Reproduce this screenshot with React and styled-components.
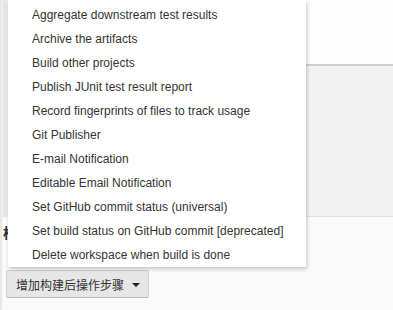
import React from 'react'
import styled, { createGlobalStyle } from 'styled-components'

const GlobalStyle = createGlobalStyle`
  html, body {
    margin: 0;
    padding: 0;
    background: #fafafa;
    font-family: 'Liberation Sans', Arial, 'Noto Sans CJK SC', sans-serif;
  }
`

const Page = styled.div`
  position: relative;
  width: 393px;
  height: 310px;
  overflow: hidden;
  display: flex;
  flex-direction: column;
  background: #fafafa;
`

const UpperRow = styled.div`
  display: flex;
  height: 217px;
`

const SideEdge = styled.div`
  width: 8px;
  flex: none;
  background: linear-gradient(
    to right,
    #dcdcdc 0,
    #eeeeee 1px,
    #eeeeee 3px,
    #dedede 4px,
    #e9e9e9 5px,
    #ececec 8px
  );
`

const Panels = styled.div`
  flex: 1;
  display: flex;
  flex-direction: column;
`

const TopPanel = styled.div`
  height: 64px;
  background: #fdfdfd;
  border-bottom: 2px solid #cfcfcf;
`

const GrayPanel = styled.div`
  flex: 1;
  background: #f2f2f2;
  border-bottom: 1px solid #e2e2e2;
`

const LowerSection = styled.div`
  flex: 1;
  display: flex;
  flex-direction: column;
  padding: 8px 0 0 0;
  border-left: 2px solid #e8e8e8;
`

const SectionLabel = styled.div`
  font-size: 14px;
  font-weight: bold;
  color: #333;
  margin-left: 1px;
  height: 45px;
  line-height: 16px;
  white-space: nowrap;
`

const AddButton = styled.button`
  align-self: flex-start;
  margin-left: 4px;
  height: 28px;
  padding: 0 8px 0 9px;
  display: flex;
  align-items: center;
  gap: 8px;
  background: #e6e6e6;
  border: 1px solid #d2d2d2;
  border-bottom-color: #bdbdbd;
  border-radius: 2px;
  font-family: 'Noto Sans CJK SC', sans-serif;
  font-size: 12px;
  color: #333;
  cursor: pointer;
`

const Caret = styled.span`
  width: 0;
  height: 0;
  border-left: 4px solid transparent;
  border-right: 4px solid transparent;
  border-top: 4px solid #222;
  margin-top: 1px;
`

const Menu = styled.ul`
  position: absolute;
  left: 8px;
  top: 0;
  width: 298px;
  margin: 0;
  padding: 3px 0 0 0;
  list-style: none;
  background: #fff;
  box-shadow: 1px 2px 4px rgba(0, 0, 0, 0.22);
`

const MenuItem = styled.li`
  height: 24px;
  line-height: 24px;
  padding-left: 24px;
  font-size: 12px;
  color: #333;
  white-space: nowrap;
  cursor: pointer;
`

const actions = [
  'Aggregate downstream test results',
  'Archive the artifacts',
  'Build other projects',
  'Publish JUnit test result report',
  'Record fingerprints of files to track usage',
  'Git Publisher',
  'E-mail Notification',
  'Editable Email Notification',
  'Set GitHub commit status (universal)',
  'Set build status on GitHub commit [deprecated]',
  'Delete workspace when build is done'
]

export default function App() {
  return (
    <Page>
      <GlobalStyle />
      <UpperRow>
        <SideEdge />
        <Panels>
          <TopPanel />
          <GrayPanel />
        </Panels>
      </UpperRow>
      <LowerSection>
        <SectionLabel>构建后操作</SectionLabel>
        <AddButton>
          增加构建后操作步骤
          <Caret />
        </AddButton>
      </LowerSection>
      <Menu>
        {actions.map(a => (
          <MenuItem key={a}>{a}</MenuItem>
        ))}
      </Menu>
    </Page>
  )
}
